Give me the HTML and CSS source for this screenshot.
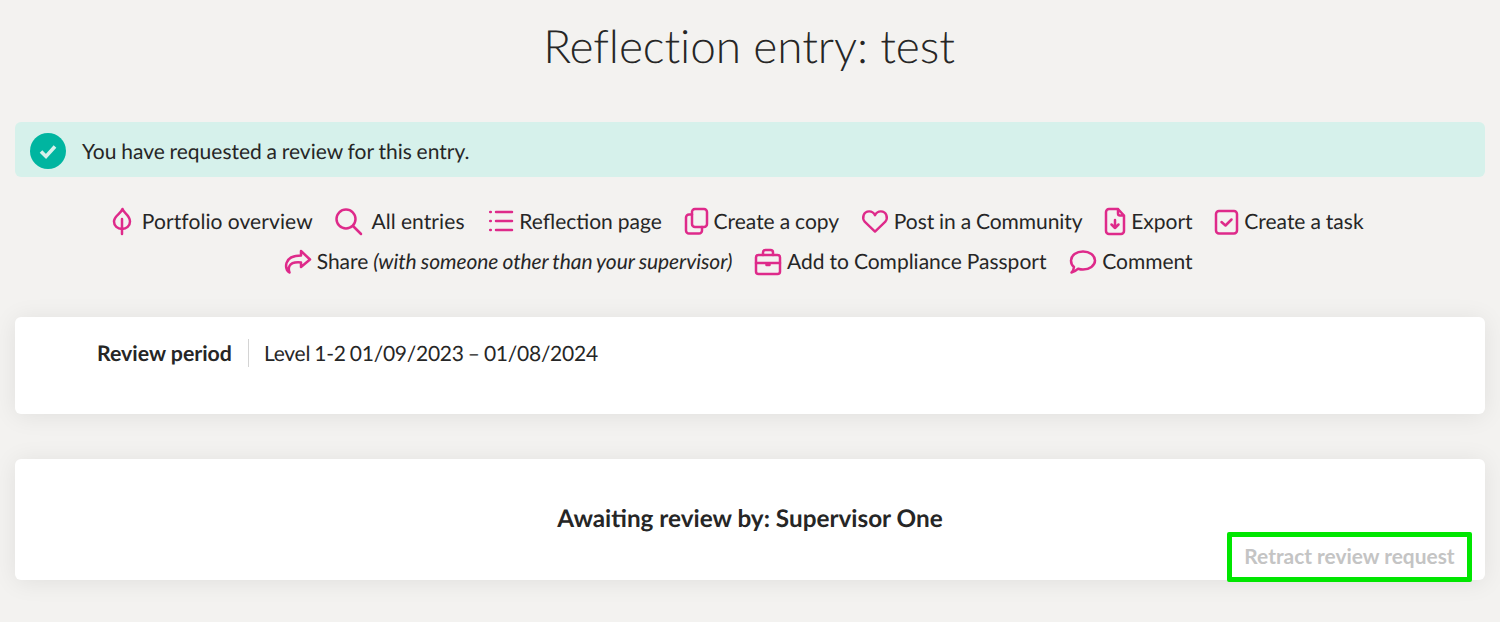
FILE: index.html
```html
<!DOCTYPE html>
<html lang="en">
<head>
  <meta charset="UTF-8" />
  <meta name="viewport" content="width=device-width, initial-scale=1.0"/>
  <title>Reflection entry: test</title>
  <link rel="stylesheet" href="styles.css">
</head>
<body>
  <h1>Reflection entry: test</h1>

  <div class="alert">
    <span class="alert-icon">
      <svg viewBox="0 0 36 36" width="36" height="36"><path d="M11 18.500l5 5 9-10" fill="none" stroke="#d6f1eb" stroke-width="3.600"/></svg>
    </span>
    <span class="alert-text">You have requested a review for this entry.</span>
  </div>

  <div class="actions">
    <div class="action-row">
      <a class="action wide">
        <svg class="icon" width="24" height="28" viewBox="0 0 24 28"><path d="M10.500 2c.5 3.500 7.500 6 7.500 12.500 0 4.500-3.500 7.500-8 7.500s-8-3-8-7.500C2 9 9 6.500 10.500 2zM10 12v15" /></svg>
        Portfolio overview
      </a>
      <a class="action wide">
        <svg class="icon" width="30" height="28" viewBox="0 0 30 28"><circle cx="11" cy="12" r="9.500" /><path d="M18 19l8 8" /></svg>
        All entries
      </a>
      <a class="action">
        <svg class="icon" width="26" height="28" viewBox="-2 0 26 28"><path d="M7 5h16M7 14h16M7 23h16" /><path d="M1.200 5h.6M1.200 14h.6M1.200 23h.6" /></svg>
        Reflection page
      </a>
      <a class="action">
        <svg class="icon" width="23" height="28" viewBox="0 0 23 28"><path d="M7 5.500a3 3 0 0 1 3-3.500h9a3 3 0 0 1 3 3v12a3 3 0 0 1-3 3h-9a3 3 0 0 1-3-3z" /><path d="M7 7.500H4a3 3 0 0 0-3 3v13a3 3 0 0 0 3 3h10a3 3 0 0 0 3-3v-3.500" /></svg>
        Create a copy
      </a>
      <a class="action narrow">
        <svg class="icon" width="26" height="28" viewBox="0 0 27 28"><path d="M13.500 25L3 15C-.5 11 1.500 4 7.500 4c2.700 0 4.800 1.500 6 4 1.200-2.500 3.300-4 6-4 6 0 8 7 4.500 11z" /></svg>
        Post in a Community
      </a>
      <a class="action">
        <svg class="icon" width="20" height="28" viewBox="0 0 20 28"><path d="M4 2h9l6 6.500V24a3 3 0 0 1-3 3H4a3 3 0 0 1-3-3V5a3 3 0 0 1 3-3zM13 2v4.500a2 2 0 0 0 2 2h4" /><path d="M10 13v8M6.500 17.500l3.500 3.500 3.500-3.500" /></svg>
        Export
      </a>
      <a class="action last">
        <svg class="icon" width="23" height="28" viewBox="0 0 23 28"><rect x="1" y="4" width="21" height="22.500" rx="3" /><path d="M6.500 15l4 3.500 6-6" /></svg>
        Create a task
      </a>
    </div>
    <div class="action-row">
      <a class="action">
        <svg class="icon" width="26" height="28" viewBox="0 0 26 28"><path d="M16 4l9 8.500-9 7.500v-4.500c-5.500-.5-10 .5-11.500 3.500-1 2-.8 4.300 0 6.500C1.500 23.500.5 20 1.500 16 3 11 9 8.500 16 8.500z" /></svg>
        <span>Share <em>(with someone other than your supervisor)</em></span>
      </a>
      <a class="action">
        <svg class="icon" width="26" height="28" viewBox="0 0 26 28"><rect x="1" y="8" width="24" height="19" rx="2.500" /><path d="M8 8V5.500A2.500 2.500 0 0 1 10.500 3h5A2.500 2.500 0 0 1 18 5.500V8M1 16h24M11.500 16h3v2h-3z" /></svg>
        Add to Compliance Passport
      </a>
      <a class="action">
        <svg class="icon" width="27" height="28" viewBox="0 0 27 28"><path d="M14 4.500c6.500 0 12 3.800 12 9s-5.500 9-12 9c-1.800 0-3.300-.3-4.800-.8-1.500 1.500-3.700 3-6.700 3.800 1.500-1.700 2.300-3.500 2.500-5.500C3 18.300 2 16 2 13.500c0-5.200 5.500-9 12-9z" /></svg>
        Comment
      </a>
    </div>
  </div>

  <section class="card period">
    <div class="period-row">
      <span class="period-label">Review period</span>
      <span class="period-value">Level 1-2 01/09/2023 – 01/08/2024</span>
    </div>
  </section>

  <section class="card review">
    <h2>Awaiting review by: Supervisor One</h2>
    <div class="review-foot">
      <button class="retract">Retract review request</button>
    </div>
  </section>
</body>
</html>
```

FILE: styles.css
```css
* { margin: 0; padding: 0; box-sizing: border-box; }
html, body { height: 622px; overflow: hidden; }
body {
  background: #f3f2f0;
  color: #262626;
  font-family: 'Lato', sans-serif;
  font-size: 21px;
  text-rendering: geometricPrecision;
  padding: 0 15px;
}
h1 {
  height: 122px;
  padding: 16px 2px 0 0;
  font-size: 46px;
  line-height: 60px;
  font-weight: 300;
  letter-spacing: -0.1px;
  text-align: center;
}
.alert {
  display: flex;
  align-items: center;
  gap: 16px;
  height: 55px;
  padding: 3px 15px 0;
  background: #d6f1eb;
  border-radius: 6px;
}
.alert-icon {
  display: flex;
  width: 36px;
  height: 36px;
  background: #00b5a0;
  border-radius: 50%;
}
.alert-text {
  padding-top: 1px;
  word-spacing: -0.6px;
}
.actions {
  padding-top: 24px;
  height: 140px;
}
.action-row {
  display: flex;
  justify-content: center;
  height: 40px;
  word-spacing: -0.4px;
}
.action {
  display: flex;
  align-items: center;
  gap: 6px;
  margin-right: 22.700px;
  white-space: nowrap;
}
.action.wide { letter-spacing: 0.1px; }
.action.narrow { letter-spacing: -0.06px; }
.action.last { margin-right: 24.700px; }
.action em {
  word-spacing: -0.75px;
  letter-spacing: -0.05px;
}
.icon {
  fill: none;
  stroke: #de2a8a;
  stroke-width: 2.500;
  stroke-linecap: round;
  stroke-linejoin: round;
  overflow: visible;
}
.card {
  background: #fff;
  border-radius: 6px;
  box-shadow: 0 2px 24px rgba(0, 0, 0, 0.08);
}
.period {
  height: 97px;
  padding: 20px 0 0 82px;
}
.period-row {
  display: flex;
  align-items: center;
  height: 32px;
}
.period-label {
  font-size: 21.300px;
  font-weight: 700;
  padding-right: 16px;
  border-right: 1px solid #d4d4d4;
  line-height: 28px;
}
.period-value {
  padding-left: 15px;
  letter-spacing: -0.25px;
  word-spacing: -1px;
}
.review {
  height: 121px;
  margin-top: 45px;
  padding-top: 45px;
}
.review h2 {
  font-size: 24.300px;
  line-height: 30px;
  text-align: center;
}
.review-foot {
  display: flex;
  justify-content: flex-end;
  margin-right: 13px;
}
.retract {
  width: 245px;
  height: 50px;
  margin-top: -2px;
  background: #fff;
  border: 5px solid #00e600;
  border-radius: 2px;
  color: #c4c4c4;
  font: 700 20.900px 'Lato', sans-serif;
  padding-bottom: 4px;
}
```
